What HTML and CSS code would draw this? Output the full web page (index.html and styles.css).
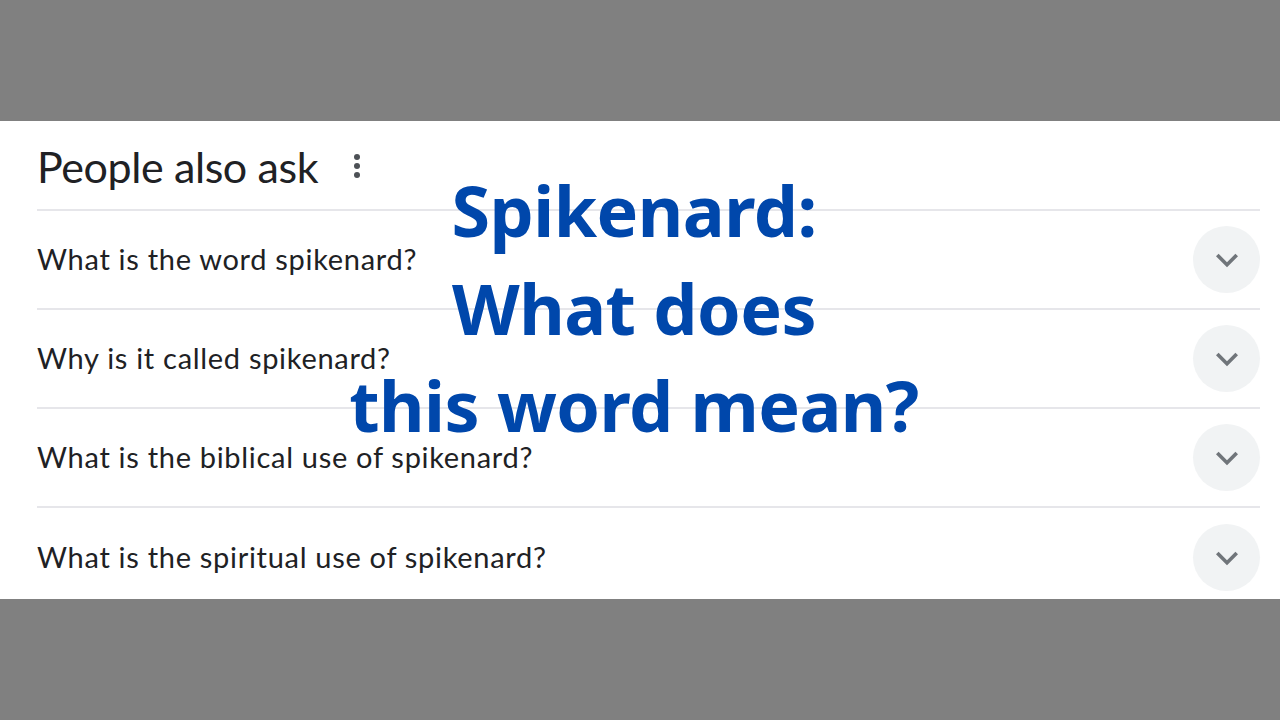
FILE: index.html
```html
<!DOCTYPE html>
<html lang="en">
<head>
<meta charset="utf-8">
<title>Spikenard: What does this word mean?</title>
<link rel="stylesheet" href="styles.css">
</head>
<body>
<div class="stage">
  <section class="paa">
    <header class="paa-head">
      <h2 class="paa-title">People also ask</h2>
      <span class="more" aria-label="More options">
        <svg viewBox="0 0 24 24" width="36" height="36"><circle cx="12" cy="6" r="2"/><circle cx="12" cy="12" r="2"/><circle cx="12" cy="18" r="2"/></svg>
      </span>
    </header>
    <div class="q-row"><span class="q-text">What is the word spikenard?</span><span class="chev"><svg viewBox="0 0 24 24" width="44" height="44"><path d="M7.41 8.59L12 13.17l4.59-4.58L18 10l-6 6-6-6 1.41-1.41z"/></svg></span></div>
    <div class="q-row"><span class="q-text">Why is it called spikenard?</span><span class="chev"><svg viewBox="0 0 24 24" width="44" height="44"><path d="M7.41 8.59L12 13.17l4.59-4.58L18 10l-6 6-6-6 1.41-1.41z"/></svg></span></div>
    <div class="q-row"><span class="q-text">What is the biblical use of spikenard?</span><span class="chev"><svg viewBox="0 0 24 24" width="44" height="44"><path d="M7.41 8.59L12 13.17l4.59-4.58L18 10l-6 6-6-6 1.41-1.41z"/></svg></span></div>
    <div class="q-row last"><span class="q-text">What is the spiritual use of spikenard?</span><span class="chev"><svg viewBox="0 0 24 24" width="44" height="44"><path d="M7.41 8.59L12 13.17l4.59-4.58L18 10l-6 6-6-6 1.41-1.41z"/></svg></span></div>
  </section>
  <h1 class="overlay-title">Spikenard:<br>What does<br>this word mean?</h1>
</div>
</body>
</html>
```
FILE: styles.css
```css
html, body {
  margin: 0;
  padding: 0;
  background: #808080;
}
.stage {
  position: relative;
  width: 1280px;
  height: 720px;
  padding-top: 121px;
  box-sizing: border-box;
}
.paa {
  background: #ffffff;
  height: 478px;
  overflow: hidden;
  padding: 0 20px 0 37px;
  font-family: "Lato", "Roboto", sans-serif;
  color: #202124;
}
.paa-head {
  height: 90px;
  display: flex;
  align-items: center;
  padding-top: 2px;
  box-sizing: border-box;
  border-bottom: 2px solid #e6e6ea;
}
.paa-title {
  margin: 0;
  font-size: 43px;
  font-weight: 400;
  letter-spacing: -0.4px;
  line-height: 1;
}
.more {
  display: flex;
  margin-left: 21px;
  fill: #4d5156;
}
.q-row {
  height: 99px;
  box-sizing: border-box;
  border-bottom: 2px solid #e6e6ea;
  display: flex;
  align-items: center;
  justify-content: space-between;
}
.q-row.last {
  border-bottom: none;
}
.q-text {
  font-size: 29px;
  letter-spacing: 0.7px;
  line-height: 1;
  padding-bottom: 3px;
}
.chev {
  width: 67px;
  height: 67px;
  border-radius: 50%;
  background: #f1f3f4;
  display: flex;
  align-items: center;
  justify-content: center;
  fill: #70757a;
}
.overlay-title {
  position: absolute;
  left: 0;
  right: 0;
  top: 162px;
  margin: 0;
  text-align: center;
  padding-right: 12px;
  font-family: "Noto Sans", "Open Sans", sans-serif;
  font-weight: 700;
  font-size: 70px;
  letter-spacing: -0.5px;
  line-height: 97.5px;
  color: #0047ab;
}
```
